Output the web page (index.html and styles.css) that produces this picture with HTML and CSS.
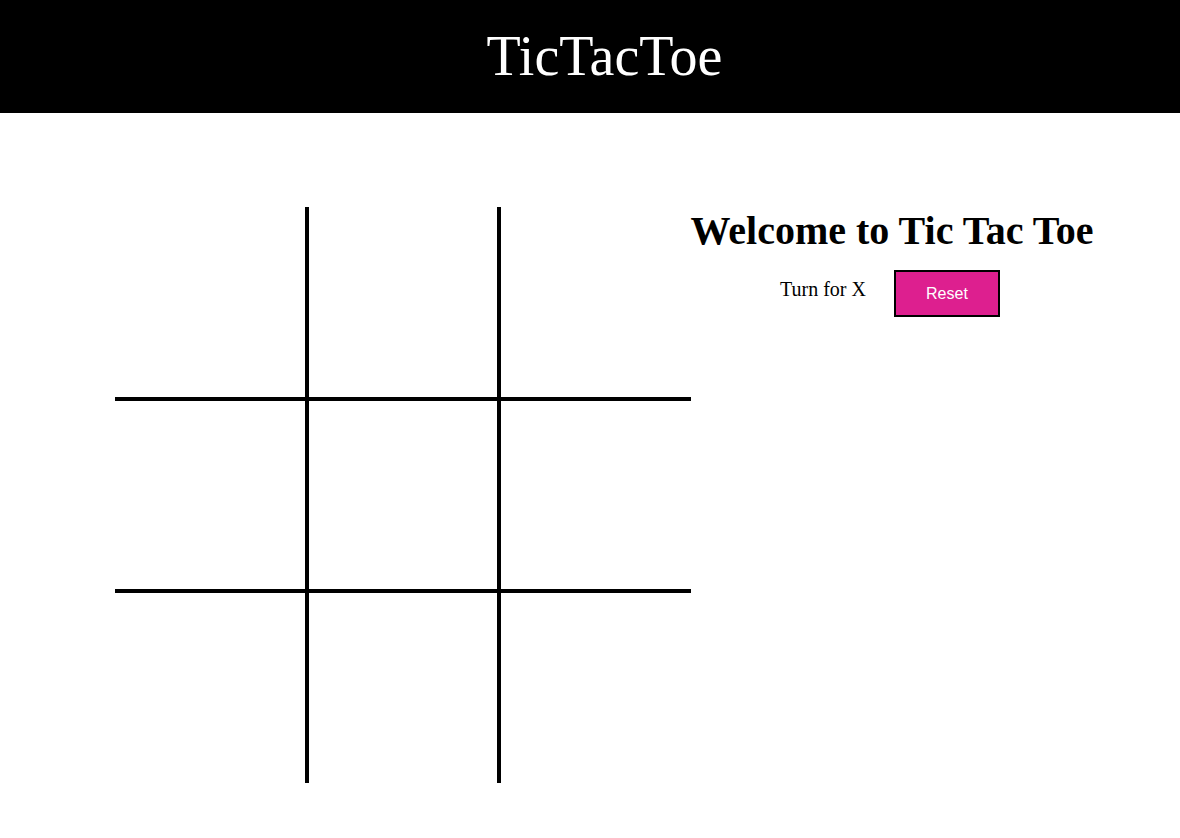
FILE: index.html
```html
<!DOCTYPE html>
<html lang="en">
<head>
<meta charset="utf-8">
<title>TicTacToe</title>
<link rel="stylesheet" href="styles.css">
</head>
<body>
<nav class="navbar">
  <span class="brand">TicTacToe</span>
</nav>
<main class="game">
  <div class="board">
    <div class="box b-r b-b"></div>
    <div class="box b-l b-r b-b"></div>
    <div class="box b-l b-b"></div>
    <div class="box b-r b-t b-b"></div>
    <div class="box b-l b-r b-t b-b"></div>
    <div class="box b-l b-t b-b"></div>
    <div class="box b-r b-t"></div>
    <div class="box b-l b-r b-t"></div>
    <div class="box b-l b-t"></div>
  </div>
  <div class="info">
    <h1 class="welcome">Welcome to Tic Tac Toe</h1>
    <div class="status-row">
      <span class="turn">Turn for X</span>
      <button class="reset">Reset</button>
    </div>
  </div>
</main>
</body>
</html>
```
FILE: styles.css
```css
html, body {
  margin: 0;
  padding: 0;
  background: #ffffff;
  font-family: "Liberation Serif", "Times New Roman", serif;
}

.navbar {
  box-sizing: border-box;
  height: 113px;
  background: #000000;
  display: flex;
  align-items: center;
  justify-content: center;
  padding-left: 29px;
  padding-bottom: 2px;
}

.brand {
  color: #ffffff;
  font-size: 56px;
  line-height: normal;
}

.game {
  display: flex;
  align-items: flex-start;
  padding-top: 94px;
  padding-left: 115px;
}

.board {
  display: grid;
  grid-template-columns: repeat(3, 192px);
  grid-template-rows: repeat(3, 192px);
  width: 576px;
  height: 576px;
}

.box {
  box-sizing: border-box;
  border: 0 solid #000000;
}

.b-r { border-right-width: 2px; }
.b-l { border-left-width: 2px; }
.b-t { border-top-width: 2px; }
.b-b { border-bottom-width: 2px; }

.info {
  width: 402px;
  display: flex;
  flex-direction: column;
  align-items: center;
  margin-top: 1px;
}

.welcome {
  margin: 0;
  font-size: 40px;
  font-weight: bold;
  line-height: 46px;
  white-space: nowrap;
}

.status-row {
  display: flex;
  align-items: flex-start;
  gap: 28px;
  margin-top: 16px;
  margin-right: 4px;
}

.turn {
  font-size: 20px;
  line-height: 23px;
  margin-top: 8px;
}

.reset {
  box-sizing: border-box;
  width: 106px;
  height: 47px;
  border: 2px solid #000000;
  background: #dd1f8f;
  color: #ffffff;
  font-family: "Liberation Sans", Arial, sans-serif;
  font-size: 16px;
  padding: 0;
  cursor: pointer;
}
```
